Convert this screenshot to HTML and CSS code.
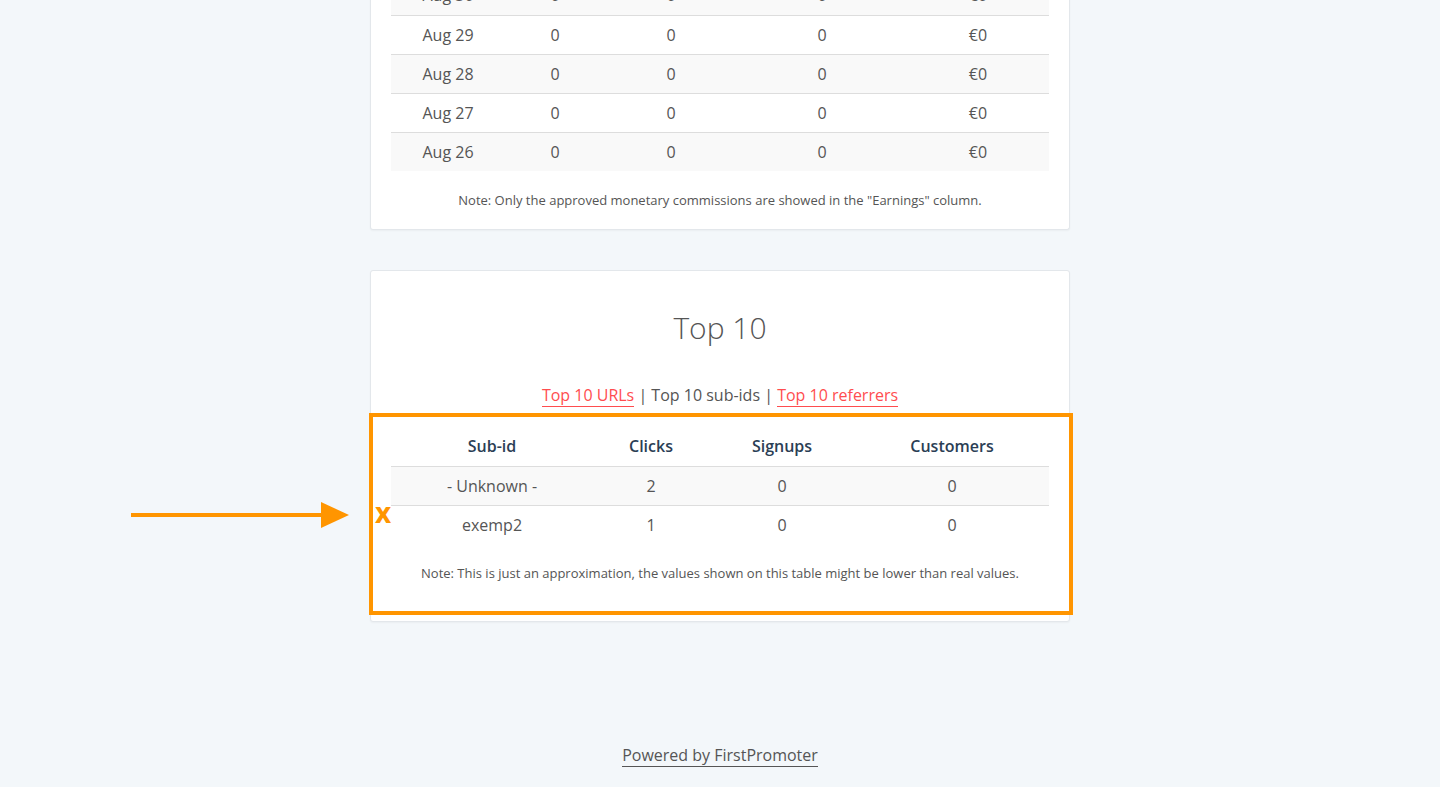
FILE: index.html
```html
<!DOCTYPE html>
<html lang="en">

<head>
  <meta charset="UTF-8" />
  <meta name="viewport" content="width=device-width, initial-scale=1.0" />
  <title>Stats</title>
  <link rel="stylesheet" href="styles.css">
</head>

<body>
  <div class="page">
    <div class="card card-daily">
      <table class="stats stats-daily">
        <colgroup>
          <col style="width: 114px" />
          <col style="width: 100px" />
          <col style="width: 132px" />
          <col style="width: 170px" />
          <col style="width: 142px" />
        </colgroup>
        <tbody>
          <tr><td>Aug 30</td><td>0</td><td>0</td><td>0</td><td>€0</td></tr>
          <tr><td>Aug 29</td><td>0</td><td>0</td><td>0</td><td>€0</td></tr>
          <tr><td>Aug 28</td><td>0</td><td>0</td><td>0</td><td>€0</td></tr>
          <tr><td>Aug 27</td><td>0</td><td>0</td><td>0</td><td>€0</td></tr>
          <tr><td>Aug 26</td><td>0</td><td>0</td><td>0</td><td>€0</td></tr>
        </tbody>
      </table>
      <p class="note">Note: Only the approved monetary commissions are showed in the "Earnings" column.</p>
    </div>

    <div class="card card-top">
      <h2 class="card-title">Top 10</h2>
      <p class="tabs">
        <a href="#">Top 10 URLs</a> | <span>Top 10 sub-ids</span> | <a href="#">Top 10 referrers</a>
      </p>
      <div class="highlight">
        <table class="stats stats-top">
          <colgroup>
            <col style="width: 202px" />
            <col style="width: 116px" />
            <col style="width: 146px" />
            <col style="width: 194px" />
          </colgroup>
          <thead>
            <tr><th>Sub-id</th><th>Clicks</th><th>Signups</th><th>Customers</th></tr>
          </thead>
          <tbody>
            <tr><td>- Unknown -</td><td>2</td><td>0</td><td>0</td></tr>
            <tr><td>exemp2</td><td>1</td><td>0</td><td>0</td></tr>
          </tbody>
        </table>
        <p class="note">Note: This is just an approximation, the values shown on this table might be lower than real values.</p>
        <span class="mark">x</span>
        <svg class="arrow" width="220" height="30" viewBox="0 0 220 30">
          <line x1="0" y1="15" x2="192" y2="15" stroke="#ff9500" stroke-width="4" />
          <polygon points="190,2 218,15 190,28" fill="#ff9500" />
        </svg>
      </div>
    </div>

    <footer class="footer">
      <a href="#">Powered by FirstPromoter</a>
    </footer>
  </div>
</body>

</html>
```

FILE: styles.css
```css
* {
  box-sizing: border-box;
}

body {
  margin: 0;
  background: #f3f7fa;
  font-family: "Open Sans", "Liberation Sans", sans-serif;
  color: #555;
}

.page {
  width: 700px;
  margin: -24px auto 0;
  display: flex;
  flex-direction: column;
  gap: 40px;
}

.card {
  background: #fff;
  border: 1px solid #e3e7eb;
  border-radius: 3px;
  box-shadow: 0 1px 2px rgba(0, 0, 0, 0.04);
  padding: 0 20px 20px;
}

.card-daily {
  border-top: none;
}

.stats {
  width: 100%;
  border-collapse: collapse;
  table-layout: fixed;
  font-size: 16px;
}

.stats td,
.stats th {
  height: 39px;
  padding: 0 8px;
  text-align: center;
  color: #555;
}

.stats tbody tr + tr td {
  border-top: 1px solid #ddd;
}

.stats tbody tr:nth-child(odd) td {
  background: #f9f9f9;
}

.stats th {
  font-weight: 600;
  color: #2b3e55;
  border-bottom: 1px solid #ddd;
  height: 50px;
  padding-top: 11px;
}

.note {
  margin: 20px 0 0;
  font-size: 13px;
  text-align: center;
  color: #555;
}

.card-daily .note {
  margin-top: 20px;
  line-height: 18px;
}

.card-top {
  padding-top: 36px;
  padding-bottom: 39px;
}

.card-title {
  margin: 0;
  font-size: 30px;
  font-weight: 300;
  text-align: center;
  color: #555;
  line-height: 42px;
}

.tabs {
  margin: 35px 0 0;
  text-align: center;
  font-size: 16px;
  line-height: 22px;
  color: #555;
}

.tabs a {
  color: #ff4d4f;
  text-decoration: none;
  border-bottom: 1px solid #ff4d4f;
}

.highlight {
  position: relative;
  margin-top: 10px;
}

.highlight::before {
  content: "";
  position: absolute;
  left: -22px;
  right: -24px;
  top: -3px;
  bottom: -33px;
  border: 4px solid #ff9500;
  pointer-events: none;
}

.mark {
  position: absolute;
  left: -16px;
  top: 84px;
  font-size: 28px;
  font-weight: 700;
  color: #ff9500;
  line-height: 24px;
}

.arrow {
  position: absolute;
  left: -260px;
  top: 84px;
}

.footer {
  margin: 82px 0 30px;
  text-align: center;
  font-size: 16px;
}

.footer a {
  color: #555;
  text-decoration: none;
  border-bottom: 1px solid #555;
}
```
